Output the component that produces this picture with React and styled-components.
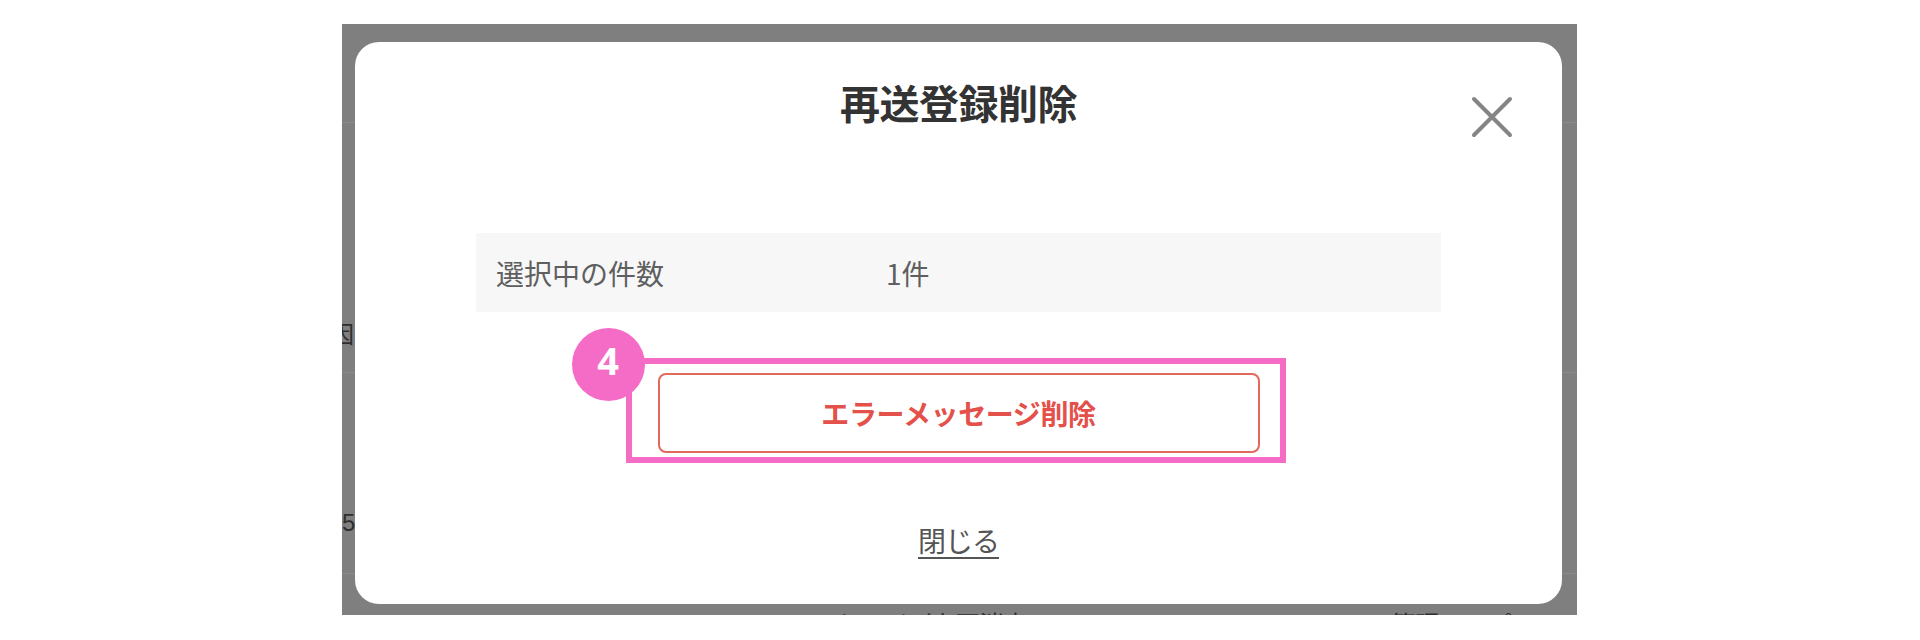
import React from 'react';
import styled, { createGlobalStyle } from 'styled-components';

const GlobalStyle = createGlobalStyle`
  html, body {
    margin: 0;
    padding: 0;
    background: #ffffff;
  }
  body {
    font-family: "Noto Sans CJK JP", "Noto Sans", sans-serif;
  }
  * { box-sizing: border-box; }
`;

const Page = styled.div`
  width: 1920px;
  height: 640px;
  padding: 24px 0 0 342px;
`;

const Backdrop = styled.div`
  position: relative;
  width: 1235px;
  height: 591px;
  background: #7f7f7f;
  overflow: hidden;
`;

const UnderPage = styled.div`
  display: grid;
  grid-template-rows: 98px 250px 201px 1fr;
  height: 100%;
  color: #2e2e2e;
  font-size: 24px;
`;

const UnderRow = styled.div`
  display: flex;
  align-items: flex-end;
  justify-content: space-between;
  padding-bottom: ${(p) => p.$pb || 0}px;
  border-top: ${(p) => (p.$line ? '1px solid #8b8b8b' : 'none')};
`;

const UnderText = styled.span`
  margin-left: ${(p) => p.$ml || 0}px;
  font-family: ${(p) => (p.$latin ? '"Liberation Sans", Arial, sans-serif' : '"Noto Sans CJK JP", sans-serif')};
  line-height: 24px;
`;

const UnderFooter = styled.div`
  display: flex;
  gap: 340px;
  padding: 31px 0 0 470px;
  font-size: 24px;
  color: #2e2e2e;
  white-space: nowrap;
`;

const Caret = styled.span`
  width: 0;
  height: 0;
  margin-bottom: 4px;
  border-top: 8px solid transparent;
  border-bottom: 8px solid transparent;
  border-left: 10px solid #b9782a;
`;

const Modal = styled.div`
  position: absolute;
  top: 18px;
  left: 13px;
  width: 1207px;
  height: 562px;
  background: #ffffff;
  border-radius: 24px;
  display: flex;
  flex-direction: column;
  align-items: center;
  padding: 32px 121px 0;
`;

const Title = styled.h2`
  margin: 0;
  font-size: 40px;
  line-height: 56px;
  font-weight: 700;
  color: #333333;
  letter-spacing: -0.5px;
`;

const CloseIcon = styled.button`
  position: absolute;
  top: 54px;
  right: 49px;
  width: 42px;
  height: 42px;
  padding: 0;
  border: none;
  background: transparent;
  display: flex;
  svg { display: block; }
`;

const InfoRow = styled.div`
  margin-top: 103px;
  width: 100%;
  height: 79px;
  background: #f7f7f7;
  display: grid;
  grid-template-columns: 390px 1fr;
  align-items: center;
  padding: 0 20px;
  font-size: 28px;
  color: #5f5f5f;
`;

const ActionArea = styled.div`
  position: relative;
  margin-top: 61px;
  width: 602px;
`;

const DangerButton = styled.button`
  width: 100%;
  height: 80px;
  background: #ffffff;
  border: 2px solid #e2695d;
  border-radius: 8px;
  color: #e4504a;
  font-family: "Noto Sans CJK JP", sans-serif;
  font-size: 28px;
  font-weight: 700;
  letter-spacing: -0.4px;
`;

const Highlight = styled.div`
  position: absolute;
  top: -15px;
  left: -32px;
  right: -26px;
  bottom: -10px;
  border: 6px solid #f56cc6;
  pointer-events: none;
`;

const StepBadge = styled.div`
  position: absolute;
  top: -45px;
  left: -86px;
  width: 73px;
  height: 73px;
  border-radius: 50%;
  background: #f56cc6;
  color: #ffffff;
  display: flex;
  align-items: center;
  justify-content: center;
  font-family: "Noto Sans", "Roboto", sans-serif;
  font-size: 38px;
  font-weight: 700;
  line-height: 1;
  padding-bottom: 10px;
`;

const CloseLink = styled.a`
  margin-top: 67px;
  font-size: 28px;
  line-height: 40px;
  color: #555555;
  text-decoration: underline;
  text-underline-offset: 5px;
  text-decoration-thickness: 2px;
  letter-spacing: -1px;
`;

export default function App() {
  return (
    <>
      <GlobalStyle />
      <Page>
        <Backdrop>
          <UnderPage>
            <UnderRow />
            <UnderRow $line $pb={27}>
              <UnderText $ml={-12}>因</UnderText>
            </UnderRow>
            <UnderRow $line $pb={38}>
              <UnderText $latin>5</UnderText>
              <Caret />
            </UnderRow>
            <UnderRow $line>
              <UnderFooter>
                <span>ッセージ（上面消去</span>
                <span>※管理ヘルプページの確認</span>
              </UnderFooter>
            </UnderRow>
          </UnderPage>
          <Modal>
            <Title>再送登録削除</Title>
            <CloseIcon aria-label="閉じる">
              <svg width="42" height="42" viewBox="0 0 42 42">
                <path d="M3 3 L39 39 M39 3 L3 39" stroke="#858585" strokeWidth="4" strokeLinecap="round" fill="none" />
              </svg>
            </CloseIcon>
            <InfoRow>
              <span>選択中の件数</span>
              <span>1件</span>
            </InfoRow>
            <ActionArea>
              <DangerButton>エラーメッセージ削除</DangerButton>
              <Highlight />
              <StepBadge>4</StepBadge>
            </ActionArea>
            <CloseLink href="#">閉じる</CloseLink>
          </Modal>
        </Backdrop>
      </Page>
    </>
  );
}
